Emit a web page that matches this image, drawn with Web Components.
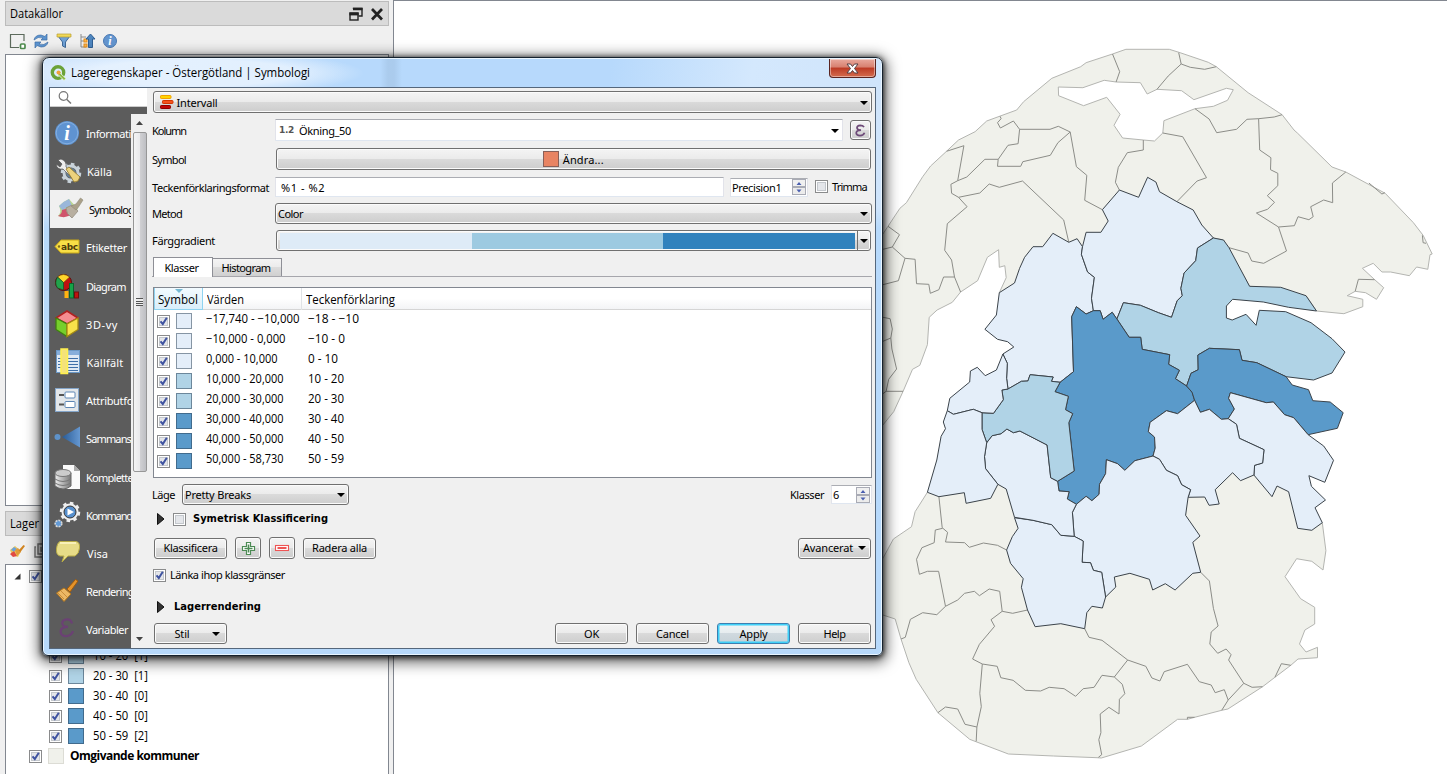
<!DOCTYPE html>
<html lang="sv">
<head>
<meta charset="utf-8">
<title>Lageregenskaper</title>
<style>
html,body{margin:0;height:100%;overflow:hidden;background:#f0f0f0}
body{font:11px "Noto Sans","Liberation Sans",sans-serif;color:#000}
</style>
</head>
<body>
<qgis-window></qgis-window>
<script>
const make = (name, css, html, after) => customElements.define(name, class extends HTMLElement {
  connectedCallback() {
    if (this.shadowRoot) return;
    const root = this.attachShadow({mode: 'open'});
    root.innerHTML = `<style>*{box-sizing:border-box}:host{box-sizing:border-box}${css}</style>` + (typeof html === 'function' ? html(this) : html);
    if (after) after(this, root);
  }
});
const at = (el, name, fallback = '') => el.getAttribute(name) ?? fallback;

/* Label fitted to a given width: letters are spread, or condensed for the seg and wide faces */
make('q-text', `:host{display:block;flex:none;white-space:pre;line-height:16px;height:16px}
:host([f=seg]){font-family:"Open Sans",sans-serif;font-size:12px}
:host([f=bold]){font-family:"Open Sans",sans-serif;font-weight:700;font-size:12px}
:host([f=wide]){font-family:"DejaVu Sans",sans-serif;font-weight:700;font-size:11px}
span{display:inline-block;transform-origin:0 50%}`, el => `<span>${at(el,'t')}</span>`, (el, root) => {
  const w = parseFloat(at(el, 'w', '0'));
  if (!w) return;
  const s = root.querySelector('span'), n = at(el, 't').length, own = s.getBoundingClientRect().width;
  if (own > w && /seg|wide/.test(at(el, 'f'))) s.style.transform = `scaleX(${(w / own).toFixed(4)})`;
  else s.style.letterSpacing = ((w - own) / n).toFixed(3) + 'px';
  el.style.width = w + 'px';
});

const ICONS = {
  add: '<path d="M15 9V2.500H1.500V15.500H10" fill="none" stroke="#5c6a5c" stroke-width="1.200"/><rect x="11.500" y="12" width="4.500" height="4.500" rx="1" fill="#fff" stroke="#4d8a4d" stroke-width="1.700"/>',
  refresh: '<path d="M2 8Q3 3 9 3L13 4.500L15 2V8H9L11 6Q6 4 2 8ZM16 10Q15 15 9 15L5 13.500L3 16V10H9L7 12Q12 14 16 10Z" fill="#5b93cf" stroke="#3d6da5" stroke-width=".7"/>',
  filter: '<path d="M3 4H15L10.500 10V15.500L7.500 14V10Z" fill="#6fa0d5" stroke="#3f6a99"/><path d="M2 2H16V5H2Z" fill="#f1d957" stroke="#b89d35" stroke-width=".7"/>',
  up: '<path d="M3 2V15H8M3 5H8M3 9H8" fill="none" stroke="#8b8b8b"/><rect x="6" y="7" width="3" height="3" fill="#ffb74d" stroke="#e88f1b"/><rect x="6" y="12" width="3" height="3" fill="#ffb74d" stroke="#e88f1b"/><path d="M12.500 2L17 7H14.500V15.500H10.500V7H8Z" fill="#4f86bf" stroke="#2f5f94"/>',
  info: '<circle cx="9" cy="9" r="6.500" fill="#6395cf" stroke="#4a79b3"/><text x="9" y="13" font-family="Liberation Serif,serif" font-weight="700" font-style="italic" font-size="12" fill="#fff" text-anchor="middle">i</text>',
  brush: '<path d="M1 8L6 4L12 9L9 15L3 13Z" fill="#e9c75c"/><path d="M1 12L5 9L8 14L4 15Z" fill="#e14a43"/><path d="M2 8L5 5L8 7L5 9.500Z" fill="#67a2e0"/><path d="M6 8L9 6L12 10L8 14Z" fill="#e09a3a"/><path d="M9.500 8.500L14.500 3L16 4L11.500 10Z" fill="#d18420"/>',
  stack: '<path d="M6 2H16V12H6ZM4 5H3V15H13V13" fill="none" stroke="#777" stroke-width="1.500"/><path d="M9 5V9H13" fill="none" stroke="#777" stroke-width="1.300"/>',
  float: '<path d="M4.500 2V1.500H13V9H9.500" fill="none" stroke="#222" stroke-width="1.400"/><path d="M4 2H13.500" stroke="#222" stroke-width="2.500"/><rect x="1" y="6" width="8" height="7" fill="#dadada" stroke="#222" stroke-width="1.400"/><path d="M.4 7H9.600" stroke="#222" stroke-width="2.800"/>',
  shut: '<path d="M2 2L12 12.500M12 2L2 12.500" stroke="#222" stroke-width="2.700"/>',
  logo: '<circle cx="8" cy="8.500" r="5.700" fill="none" stroke="#6aa238" stroke-width="3.400"/><path d="M8 7.500L11.500 8L10.500 9.500L16 14.500L14 16.500L9 11.500L8 12.500Z" fill="#8cbb45" stroke="#f3faf0" stroke-width=".8"/><circle cx="8.500" cy="8.500" r="2" fill="#f0a23c"/>',
  search: '<circle cx="5.500" cy="6" r="4.300" fill="none" stroke="#777" stroke-width="1.200"/><path d="M8.600 9.200L13 13.500" stroke="#777" stroke-width="1.500"/>',
  interval: '<rect x=".5" y=".5" width="10.500" height="3" rx=".7" fill="#ffd500" stroke="#f2a200"/><rect x="2.500" y="5.500" width="10.500" height="3" rx=".7" fill="#f4511e" stroke="#d23500"/><rect x=".5" y="10.500" width="10" height="3" rx=".7" fill="#c00808" stroke="#8e0000"/>',
  plus: '<path d="M5.500 1H9.500V5H13.500V9H9.500V13H5.500V9H1.500V5H5.500Z" fill="#fff" stroke="#4c8b54" stroke-width="1.200" transform="translate(0 .5)"/><path d="M7.500 3.500V11.500M3.500 7.500H11.500" stroke="#4c8b54" stroke-width="1.600"/>',
  minus: '<rect x=".5" y="4.500" width="13" height="5" fill="#fff" stroke="#ee5555" stroke-width="1.100"/><path d="M2.500 7H11.500" stroke="#ee5555" stroke-width="2"/>',
  eps: '<path d="M11 4.200Q10 2.300 7.200 2.300Q4 2.500 4 4.800Q4.200 7 8 7.200Q3.300 7.500 3.200 10Q3.400 12.600 7 12.600Q10.500 12.400 11.500 9.700" fill="none" stroke="#6d4a78" stroke-width="1.700"/>',
  sInfo: '<circle cx="12" cy="12" r="12" fill="#5f93d1"/><circle cx="12" cy="12" r="10.800" fill="none" stroke="#84afe0"/><text x="12" y="19" font-family="Liberation Serif,serif" font-weight="700" font-style="italic" font-size="20" fill="#fff" text-anchor="middle">i</text>',
  sTool: '<circle cx="15" cy="14" r="7" fill="none" stroke="#c9d3da" stroke-width="3"/><circle cx="15" cy="14" r="9" fill="none" stroke="#c9d3da" stroke-width="2.500" stroke-dasharray="3.500 3.500"/><circle cx="15" cy="14" r="5" fill="#668096"/><path d="M2 1L6 5L4 8L0 5Q1 11 7 10L17 20L20 17L10 8Q11 2 5 0Z" fill="#eee" stroke="#555" stroke-width=".7"/><path d="M10 10L13 8L24 18L22 22L18 23Z" fill="#ecd27c" stroke="#8b7124" stroke-width=".8"/>',
  sBrush: '<path d="M1 9Q6 4 11 2L20 12Q10 22 0 19Q4 15 1 9Z" fill="#b9d691"/><path d="M1 9Q6 4 11 2L14 9Q8 9 5 14Z" fill="#9ab7da"/><path d="M4 13L11 11L14 17Q8 22 0 19Q4 17 4 13Z" fill="#d0546c"/><path d="M8 11L14 8L20 14L14 21Q8 17 8 11Z" fill="#b8afa0" stroke="#8f887b" stroke-width=".7"/><path d="M13 9L18 7L22.500 1L25 3L20.500 10L18 13Z" fill="#aaa089" stroke="#8f8977" stroke-width=".6"/>',
  sAbc: '<path d="M6 5H24V18H6L0 11.500Z" fill="#f8df46" stroke="#c7a616"/><circle cx="4" cy="11.500" r="1.200" fill="#7f6c20"/><text x="14.500" y="14.500" font-family="DejaVu Sans,sans-serif" font-weight="700" font-size="9" text-anchor="middle" fill="#4c3c0b" textLength="17">abc</text>',
  sDiag: '<circle cx="8.500" cy="8.500" r="8" fill="#bf1010" stroke="#5b0808"/><path d="M8.500 8.500L2.500 3Q8.500-2 14.500 3Z" fill="#ffd52a" stroke="#7b6113" stroke-width=".6"/><path d="M8.500 8.500L2.500 3Q-1 9 2.500 14L8.500 16Z" fill="#22a24b" stroke="#134f26" stroke-width=".7"/><rect x="9.500" y="17" width="4" height="7" fill="#ffb310"/><rect x="14.500" y="9.500" width="4" height="14.500" fill="#16a348" stroke="#0c632b"/><rect x="19.500" y="18" width="4" height="6" fill="#bd1510" stroke="#71100c"/>',
  s3d: '<path d="M12 -1L23 6L12 12L1 6Z" fill="#f58c90" stroke="#b02020" stroke-width="1.500"/><path d="M1 6L12 12V24.500L1 17.500Z" fill="#76cf2c" stroke="#3f8110" stroke-width="1.300"/><path d="M23 6L12 12V24.500L23 17.500Z" fill="#f8e24a" stroke="#a58b14" stroke-width="1.300"/>',
  sField: '<rect x=".5" y=".5" width="23" height="22" fill="#dfe9f4" stroke="#6c98c5"/><path d="M1 1H23V5H1Z" fill="#87aedb"/><path d="M12 8.500H22M12 11.500H22M12 14.500H22M12 17.500H22M2 8.500H5M2 11.500H5M2 14.500H5M2 17.500H5M12 20.500H22" stroke="#3e6fa8"/><rect x="5" y="-1" width="6.500" height="24.500" fill="#f4e27a" stroke="#fff04d" stroke-width="1.500"/>',
  sForm: '<rect x=".5" y=".5" width="23" height="23" fill="#e2e6ea" stroke="#84a5c9"/><rect x="10" y="4" width="10" height="6" rx="1" fill="#fff" stroke="#5d86b5"/><rect x="10" y="13.500" width="10" height="6" rx="1" fill="#fff" stroke="#5d86b5"/><path d="M4 7H9M4 16.500H9" stroke="#555" stroke-width="2"/>',
  sJoin: '<defs><linearGradient id="j"><stop offset="0" stop-color="#295b96"/><stop offset="1" stop-color="#6698d1"/></linearGradient></defs><circle cx="2.500" cy="11" r="3" fill="#5e92c9"/><path d="M7 11L25 .5V21.500Z" fill="url(#j)"/>',
  sDb: '<defs><linearGradient id="d"><stop offset="0" stop-color="#eee"/><stop offset="1" stop-color="#777"/></linearGradient></defs><path d="M8 0H19L25 6V24H8Z" fill="#fafafa"/><path d="M19 0V6H25Z" fill="#aaa"/><path d="M0 8V21Q8 27 16 21V8Z" fill="url(#d)" stroke="#666"/><ellipse cx="8" cy="8" rx="8" ry="3.500" fill="#ccc" stroke="#777"/><path d="M0 14Q8 19 16 14M0 18Q8 23 16 18" fill="none" stroke="#777"/>',
  sGear: '<circle cx="15" cy="9" r="8.500" fill="#efefef"/><circle cx="15" cy="9" r="9" fill="none" stroke="#efefef" stroke-width="2.500" stroke-dasharray="3.500 3.500"/><circle cx="15" cy="9" r="6" fill="#568fcd" stroke="#333"/><path d="M12.500 5.500L19 9L12.500 12.500Z" fill="#fff"/><circle cx="3.500" cy="20.500" r="3.300" fill="#629ad6" stroke="#d9d9d9" stroke-width="1.600" stroke-dasharray="2 1"/>',
  sVisa: '<path d="M4 .5H20Q24 1 23.500 7T19 15H12L6 21L8 15H4Q0 14 .5 8T4 .5Z" fill="#e7dc88" stroke="#b7ab45"/><path d="M4 2H20" stroke="#fff9c8" stroke-width="1.500"/>',
  sRend: '<path d="M9 9L16 15L9 22.500L1.500 14Z" fill="#edb865" stroke="#b4761b"/><path d="M12 10L20.500 .5L23 2L15 13Z" fill="#e5932a" stroke="#9e5a0c"/><path d="M3 14L9 20M6 12L12 18" stroke="#c08332" stroke-width=".8"/>',
  sEps: '<path d="M17 6.500Q16 2 11.500 2.300Q7 3 7.300 6.500Q7.600 9.700 13 9.800Q5.600 9.900 5.600 14.500Q5.800 19.200 11 19.200Q16.500 18.800 18 14" fill="none" stroke="#6b4174" stroke-width="2.300"/>'
};
make('q-icon', ':host{display:block;flex:none}svg{display:block;overflow:visible}', el => {
  const w = at(el, 'w', 18), h = at(el, 'h', w);
  return `<svg width="${w}" height="${h}" viewBox="0 0 ${w} ${h}">${ICONS[at(el,'n')]}</svg>`;
});

const FACE = 'background:linear-gradient(#f4f4f4,#ebebeb 48%,#dadada 50%,#cdcdcd);border:1px solid #707070;border-radius:3px;box-shadow:inset 0 0 0 1px #fbfbfb;';
make('q-btn', `:host{display:flex;flex:none;align-items:center;justify-content:center;height:21px;width:73px;${FACE}}
:host([focus]){border-color:#3c7fb1;box-shadow:inset 0 0 0 1.500px #3fd0f8;background:linear-gradient(#f0f4f6,#e6ecef 48%,#d0d9df 50%,#c6d2d8)}`, '<slot></slot>');
make('q-arrow', ':host{display:block;flex:none;width:0;height:0;border:4px solid transparent;border-top-color:#000;border-bottom:0}', '');
make('q-combo', `:host{display:flex;flex:none;align-items:center;height:21px;padding:0 3.500px 0 3px;${FACE}}
:host([plain]){background:#fff;border-color:#abadb3 #e2e3ea #dfe6f0 #e2e3ea;border-radius:1px;box-shadow:none;padding-right:3px}
div{flex:1;display:flex;align-items:center}`, '<div><slot></slot></div><q-arrow style="margin-top:1px"></q-arrow>');
make('q-field', ':host{display:flex;flex:none;align-items:center;height:20px;background:#fff;border:1px solid;border-color:#abadb3 #e2e3ea #dfe6f0 #e2e3ea;padding:1px 0 0 5px}', '<slot></slot>');
make('q-spin', `:host{display:flex;flex:none;align-items:center;height:19px;background:#fff;border:1px solid;border-color:#abadb3 #e2e3ea #dfe6f0 #e2e3ea;padding:0 1px 0 1px}
div{flex:1;display:flex;padding-top:1px}svg{display:block}`, '<div><slot></slot></div><svg width="14" height="16"><rect x=".5" y=".5" width="13" height="7" fill="#f0f0f0" stroke="#a9abb5"/><rect x=".5" y="8.500" width="13" height="7" fill="#ececec" stroke="#a9abb5"/><path d="M4.500 6L7 3L9.500 6ZM4.500 10.500H9.500L7 13.500Z" fill="#4a5fb0"/></svg>');
make('q-check', ':host{display:block;flex:none}svg{display:block}', el => `<svg width="13" height="13"><rect x=".5" y=".5" width="12" height="12" fill="#fff" stroke="#8a8b8c"/><rect x="2.500" y="2.500" width="8" height="8" fill="#e4e6ea" stroke="#c3c7cc"/>${el.hasAttribute('on') ? '<path d="M3.500 6.300L5.800 9L9.800 2.800" fill="none" stroke="#3f53a0" stroke-width="2"/>' : ''}</svg>`);
make('q-swatch', ':host{display:block;flex:none;width:16px;height:16px;background:var(--c);border:1px solid rgba(40,60,80,.5)}:host([soft]){border-color:#dcdcd5}', '');
make('q-fold', ':host{display:block;flex:none;width:8px;height:12px}svg{display:block}', '<svg width="8" height="12"><path d="M.5 .5L7 6L.5 11.500Z" fill="#333" stroke="#111"/></svg>');

make('q-side', `:host{display:flex;flex:none;align-items:center;height:38.200px;color:#fff;overflow:hidden;width:81px}
:host([sel]){background:#f0f0f0;color:#000;height:38px}q-icon{width:31px}q-text{margin-top:2px}`, el => `<q-icon n="${at(el,'i')}" w="24" style="margin-left:${at(el,'dx','5')}px"></q-icon><q-text t="${at(el,'t')}" w="${at(el,'w')}"></q-text>`);

make('q-class', ':host{display:flex;height:20px;align-items:center;padding-left:3px}q-check{margin:4px 6px 0 0}q-swatch{margin:3px 14px 0 0}.l{margin-left:var(--g)}.v,.l{margin-top:0}', el =>
  `<q-check on></q-check><q-swatch style="--c:${at(el,'c')}"></q-swatch><q-text class="v" f="seg" t="${at(el,'v')}" w="${at(el,'vw')}"></q-text><q-text class="l" style="--g:${102 - at(el,'vw')}px" f="seg" t="${at(el,'l')}" w="${at(el,'lw')}"></q-text>`);
make('q-leaf', ':host{display:flex;height:20px;align-items:center;padding-left:43px}q-check{margin-right:6px}q-swatch{margin:-1px 8.500px 0 0}', el =>
  `<q-check on></q-check><q-swatch style="--c:${at(el,'c')}"></q-swatch><q-text f="seg" t="${at(el,'t')}" w="55"></q-text>`);

make('q-dockbar', ':host{display:flex;flex:none;align-items:center;height:25px;background:#dadada;border:1px solid #bcbcbc;padding:1px 4px 0 4px}div{flex:1}q-icon{margin:-1px 0 0 7px}', el =>
  `<q-text f="seg" t="${at(el,'t')}" w="${at(el,'w')}"></q-text><div></div><q-icon n="float" w="14"></q-icon><q-icon n="shut" w="14"></q-icon>`);

/* Map: vertices are recorded on three stacked sheets a, b and c */
const SHEET = {a: 30, b: 280, c: 510};
const line = s => { let y0 = 0; return s.trim().split(/\s+/).map(p => {
  if (SHEET[p] !== undefined) { y0 = SHEET[p]; return ''; }
  const [x, y] = p.split(',').map(Number);
  return (880 - 394 + x / 2.7654).toFixed(1) + ',' + (y0 - 1 + y / 3).toFixed(1);
}).join(' '); };
const LAND = [
 'a 680,58 800,58 830,68 908,97 930,110 1018,188 1112,254 1145,300 1155,310 1250,411 1288,426 1397,490 1475,578 1502,616 1527,672 1521,674 1515,718 1484,711 1464,737 1412,726 1388,726 1364,700 1334,715 1368,749 1393,773 1373,808 1343,788 1314,784 1292,797 1335,808 b 1335,80 1283,101 1207,93 a 1178,797 1022,769 950,630 922,624 740,600 560,700 330,788 349,743 345,707 330,712 328,659 297,682 270,752 223,786 b 200,67 158,90 136,112 131,194 110,256 90,268 64,334 38,395 8,435 -60,400 a -60,700 8,612 22,589 55,535 73,518 118,440 140,408 184,364 217,330 263,305 295,273 378,240 397,215 475,145 555,110 570,98 643,72',
 'b 131,637 235,600 400,600 540,640 850,600 975,560 1100,600 1150,640 1180,700 c 1223,38 1233,122 1225,180 1194,154 1152,146 1120,200 1163,266 1202,292 1202,342 1175,360 1160,402 1178,426 1210,412 1210,443 1156,447 1136,466 1092,502 1058,530 962,597 945,601 870,622 850,628 823,628 723,708 612,744 600,743 480,738 355,732 248,688 160,608 100,508 80,458 58,387 42,327 8,315 -60,250 8,145 37,87 87,50 b 97,695'];
const LAKE = 'a 493,171 561,173 620,151 653,156 720,158 739,192 766,178 834,182 868,209 958,175 977,179 961,211 922,229 871,236 785,272 782,309 759,333 728,330 671,324 647,286 664,253 627,202 563,227 494,197';
const BOUNDS = [
 'a 643,72 663,125 653,156','a 826,68 833,102 797,138 766,178','a 833,102 858,112 898,118 930,110',
 'a 871,236 910,267 931,308 986,298 1015,268 1047,266 1090,261 1112,254',
 'a 1047,266 1050,360 1081,383 1080,419 1100,430 1100,467 1071,497 1091,517 1072,538 1041,549 1102,591 1146,587 1156,560 1186,569 1198,560 1191,530 1227,510 1252,518 1251,459 1288,426',
 'a 1102,591 1124,663 1061,700 1028,693 1018,669 965,653','a 782,309 837,320 903,443 877,453 821,515','a 728,330 728,360 684,368 659,412 651,457 662,480',
 'a 332,259 335,266 325,278 333,294 369,273 386,298 470,298 493,289 526,306 543,410 572,436 566,511 615,539',
 'a 386,298 382,341 354,346 327,388 325,409 389,409 395,395 471,376 492,338 526,306','a 184,364 232,347 215,452',
 'a 327,388 290,388 240,441 215,452 196,463 198,490 217,502 276,489 302,462 330,472 394,453 508,570 522,637',
 'a 217,502 241,530 186,581 179,661 198,690 206,741 223,786','a 206,741 176,741 163,779 139,790 135,763 101,761 97,688 69,685 34,651 8,658',
 'a 69,685 51,752 8,764','a 22,589 54,614 34,651','a 1352,459 1388,492 1396,488','a 1500,616 1502,638 1510,640','a 1314,784 1323,748 1368,749',
 'b 8,112 28,116 34,147 30,174 8,184','b 30,174 33,207 46,267 24,298 17,334 64,334','b 17,334 8,341',
 'b 163,650 172,743 c 187,67 181,96 234,98 247,112 286,99 325,106 350,120',
 'c 173,55 153,60 150,98 116,113 101,148 109,193 131,184 162,184 181,289 215,270 234,250 261,244 275,257 302,237 331,244 338,304 367,310 408,300',
 'c 181,289 157,314 118,308 84,328 70,382 58,387',
 'c 338,304 307,329 317,349 275,403 256,447 283,462 324,469 334,503 368,511 402,541 444,543 468,532 509,536 541,559 562,536 592,532 614,496 648,501 685,450',
 'c 283,462 276,550 280,590 268,651 266,694','c 268,651 235,643 215,597 181,591 160,608',
 'c 566,356 578,382 614,391 685,450 735,469 752,504 774,513 786,485 850,463 883,515 916,525 927,548 952,539 963,570 1006,520','c 963,570 945,601',
 'c 648,501 670,523 677,551 662,568 661,612 633,592 609,612 611,668 605,689 613,734 604,742',
 'c 887,187 911,213 922,295 935,348 916,366 912,402 934,430 957,417 971,434 964,450 1006,520 1029,532 1058,530','c 1092,502 1110,461 1136,466','c 850,628 850,622 870,622'];
const L = '#e4eef9', M = '#b0d3e6', D = '#5a9aca';
const AREAS = [
 [L,'a 330,788 372,759 386,715 400,682 423,650 450,650 478,610 522,637 545,626 560,650 557,673 574,726 593,742 585,805 b 590,92 570,102 543,80 530,110 535,275 498,307 474,304 479,291 415,284 409,303 391,304 354,327 350,295 352,250 340,222 370,201 353,185 325,178 290,148 322,105'],
 [L,'a 560,650 570,607 611,607 631,573 615,539 662,480 715,502 740,442 763,456 773,485 821,515 866,540 890,585 922,624 878,654 873,692 841,729 832,775 836,797 822,812 b 806,112 770,98 720,76 673,68 655,117 642,97 617,118 609,92 590,92 a 585,805 593,742 574,726 557,673'],
 [M,'a 922,624 950,630 965,653 1022,769 1108,772 1178,797 b 1207,93 1130,82 1060,66 975,58 958,78 958,114 974,120 1012,103 1040,136 1049,91 1122,95 1192,128 1250,176 1286,216 1250,279 1199,300 1123,290 1042,248 1001,241 994,209 911,205 879,225 880,269 860,280 848,318 817,296 828,271 798,253 801,224 725,208 721,172 689,172 655,117 673,68 720,76 770,98 806,112 a 822,812 836,797 832,775 841,729 873,692 878,654'],
 [D,'b 543,80 570,102 590,92 609,92 617,118 642,97 655,117 689,172 721,172 725,208 801,224 798,253 828,271 817,296 848,318 863,337 870,361 823,401 792,392 747,427 742,455 759,471 761,504 755,528 705,542 677,571 657,551 626,539 624,581 607,613 606,643 586,662 570,649 543,673 518,657 523,635 495,633 491,604 537,573 522,428 533,401 513,389 521,349 484,335 498,307 535,275 530,110'],
 [D,'b 848,318 860,280 880,269 879,225 911,205 994,209 1001,241 1042,248 1123,290 1140,315 1185,329 1197,362 1245,366 1281,398 1265,445 1184,464 1144,413 1119,404 1088,366 1068,368 969,338 964,355 980,387 963,416 944,418 911,388 886,397 870,361 863,337'],
 [L,'b 969,338 1068,368 1088,366 1119,404 1144,413 1184,464 1227,498 1254,541 1230,607 1186,587 1193,619 1232,660 1203,683 1223,728 1194,751 1155,745 1130,635 1098,618 1084,650 1034,585 1036,556 1058,549 1062,509 994,475 986,433 963,416 980,387 964,355'],
 [L,'b 870,361 886,397 911,388 944,418 963,416 986,433 994,475 1062,509 1058,549 1036,556 1034,585 997,602 975,578 927,629 938,672 910,676 898,651 852,652 859,629 834,614 823,587 792,571 773,538 755,528 761,504 759,471 742,455 747,427 792,392 823,401'],
 [L,'b 755,528 773,538 792,571 823,587 834,614 859,629 852,652 845,706 885,768 c 865,97 887,187 865,190 816,240 789,221 754,240 745,208 691,190 648,201 652,231 624,261 613,187 590,181 582,158 559,157 562,93 537,79 b 532,697 543,673 570,649 586,662 606,643 607,613 624,581 626,539 657,551 677,571 705,542'],
 [L,'c 372,23 423,31 475,44 500,76 537,79 562,93 559,157 582,158 590,181 613,187 624,261 615,294 586,289 572,308 566,356 500,341 429,350 408,300 391,232 396,206 361,160 350,120 366,80 382,55'],
 [L,'b 295,488 310,467 335,461 351,447 369,458 387,453 462,495 472,593 491,604 495,633 523,635 518,657 543,673 532,697 537,769 500,766 475,734 423,721 372,712 349,627 326,613 292,566 289,530'],
 [M,'b 282,398 314,400 341,359 337,330 354,327 391,304 409,303 415,284 479,291 474,304 498,307 484,335 521,349 513,389 533,401 522,428 537,573 491,604 472,593 462,495 387,453 369,458 351,447 335,461 310,467 295,488 282,448'],
 [L,'b 340,222 352,250 350,295 354,327 337,330 341,359 314,400 282,398 258,388 203,403 186,392 193,355 248,306 250,273 269,262 291,287 322,270'],
 [L,'b 186,392 203,403 258,388 282,398 282,448 295,488 289,530 292,566 326,613 306,655 238,670 233,638 163,650 131,637 157,540 169,469 181,446 175,426']];
make('q-map', ':host{display:block;background:#fff;border-left:1px solid #828790;border-top:1px solid #828790;overflow:hidden}svg{display:block}', () => {
  const poly = (s, f, c) => `<polygon points="${line(s)}" fill="${f}" stroke="${c}"/>`;
  return `<svg width="1053" height="773" stroke-width="1" stroke-linejoin="round">${LAND.map(s => poly(s, '#f0f1eb', '#b4b5b1')).join('')}${poly(LAKE, '#fff', '#b4b5b1')}${BOUNDS.map(s => `<polyline points="${line(s)}" fill="none" stroke="#8c8d88"/>`).join('')}${AREAS.map(([f, s]) => poly(s, f, '#3b434a')).join('')}</svg>`;
});

make('q-docks', `:host{display:flex;flex-direction:column;padding:1px 0 0 5px;width:389px;background:#f0f0f0}
.tools{display:flex;height:28px;flex:none;align-items:center;gap:5px;padding:1px 0 0 4px}
.box{background:#fff;border:1px solid #828790}
.tree{flex:1;border-bottom:0;overflow:hidden}
.root{display:flex;align-items:center;height:20px;padding:0 0 0 8px;gap:8px;margin-top:1px}
.hid{height:60px}
.last{display:flex;height:20px;align-items:center;padding-left:23px}`,
`<q-dockbar t="Datakällor" w="53"></q-dockbar>
<div class="tools"><q-icon n="add"></q-icon><q-icon n="refresh"></q-icon><q-icon n="filter"></q-icon><q-icon n="up"></q-icon><q-icon n="info"></q-icon></div>
<div class="box" style="height:452px;flex:none"></div>
<q-dockbar t="Lager" w="29" style="margin-top:5px"></q-dockbar>
<div class="tools"><q-icon n="brush"></q-icon><q-icon n="stack"></q-icon></div>
<div class="box tree">
<div class="root"><svg width="7" height="7"><path d="M6.500 .5V6.500H.5Z" fill="#333"/></svg><q-check on></q-check></div>
<div class="hid"></div>
<q-leaf c="${M}" t="10 - 20  [1]"></q-leaf><q-leaf c="${M}" t="20 - 30  [1]"></q-leaf><q-leaf c="${D}" t="30 - 40  [0]"></q-leaf><q-leaf c="${D}" t="40 - 50  [0]"></q-leaf><q-leaf c="${D}" t="50 - 59  [2]"></q-leaf>
<div class="last"><q-check on></q-check><q-swatch soft style="--c:#f0f1eb;margin:-1px 6px 0"></q-swatch><q-text f="bold" t="Omgivande kommuner" w="129"></q-text></div>
</div>`);

make('q-sidebar', `:host{display:grid;grid-template:19px 541px / 81px 16px;width:97px;flex:none}
.s{grid-column:1/3;background:#fff;padding:2px 0 0 8px;border-bottom:1px solid #ccc}
.l{background:#5c5c5c;padding-top:7px;overflow:hidden}
.b{background:linear-gradient(#5c5c5c 7px,#f0f0f0 7px);padding:7px 0 0 1px;display:flex;flex-direction:column;align-items:center}
.up,.dn{height:18px;flex:none;display:flex;align-items:center}
.t{width:14px;height:340px;flex:none;border:1px solid #979797;border-radius:2px;background:linear-gradient(90deg,#f4f4f4,#e9e9eb 50%,#d0d0d3 52%,#bebfc3);display:flex;align-items:center;justify-content:center}
.g{width:7px;height:8px;background:repeating-linear-gradient(#555 0 1px,#eee 1px 2.500px)}
.f{flex:1}`,
`<div class="s"><q-icon n="search" w="15"></q-icon></div>
<div class="l"><q-side i="sInfo" t="Informati" w="45"></q-side><q-side i="sTool" t="Källa" w="25" dx="6"></q-side><q-side sel i="sBrush" t="Symbolog" w="45" dx="8"></q-side><q-side i="sAbc" t="Etiketter" w="41"></q-side><q-side i="sDiag" t="Diagram" w="40"></q-side><q-side i="s3d" t="3D-vy" w="32"></q-side><q-side i="sField" t="Källfält" w="37" dx="5.500"></q-side><q-side i="sForm" t="Attributfo" w="47"></q-side><q-side i="sJoin" t="Sammans" w="45"></q-side><q-side i="sDb" t="Komplette" w="47"></q-side><q-side i="sGear" t="Kommand" w="46"></q-side><q-side i="sVisa" t="Visa" w="21" dx="6"></q-side><q-side i="sRend" t="Rendering" w="48"></q-side><q-side i="sEps" t="Variabler" w="42"></q-side></div>
<div class="b"><div class="up"><svg width="7" height="4"><path d="M0 4L3.500 0L7 4Z" fill="#444"/></svg></div><div class="t"><div class="g"></div></div><div class="f"></div><div class="dn"><svg width="7" height="4"><path d="M0 0L3.500 4L7 0Z" fill="#444"/></svg></div></div>`);

make('q-table', `:host{display:block;background:#fff;border:1px solid #828790;height:191px;width:719px}
.h{display:flex;height:22px;border-bottom:1px solid #d5d5d5;background:linear-gradient(#fff 50%,#f3f4f6);align-items:center;margin-bottom:-1px}
.h div{height:22px;display:flex;align-items:center;border-right:1px solid #e0e3e6;padding-top:3px}
.h .a{width:49px;padding-left:3px;border:1px solid #8fd3f0;border-top:0;background:linear-gradient(#f3fbff,#d9eefa);position:relative}
.a svg{position:absolute;left:20px;top:1px}`,
`<div class="h"><div class="a"><svg width="8" height="4"><path d="M0 0H8L4 4Z" fill="#76b9d3"/></svg><q-text f="seg" t="Symbol" w="40"></q-text></div><div style="width:99px;padding-left:4px"><q-text f="seg" t="Värden" w="37"></q-text></div><div style="border:0;padding-left:4px"><q-text f="seg" t="Teckenförklaring" w="89"></q-text></div></div>
<q-class c="${L}" v="−17,740 - −10,000" vw="93.500" l="−18 - −10" lw="51"></q-class>
<q-class c="${L}" v="−10,000 - 0,000" vw="79.500" l="−10 - 0" lw="37"></q-class>
<q-class c="${L}" v="0,000 - 10,000" vw="71.500" l="0 - 10" lw="30"></q-class>
<q-class c="${M}" v="10,000 - 20,000" vw="77.500" l="10 - 20" lw="36"></q-class>
<q-class c="${M}" v="20,000 - 30,000" vw="77.500" l="20 - 30" lw="36"></q-class>
<q-class c="${D}" v="30,000 - 40,000" vw="77.500" l="30 - 40" lw="36"></q-class>
<q-class c="${D}" v="40,000 - 50,000" vw="77.500" l="40 - 50" lw="36"></q-class>
<q-class c="${D}" v="50,000 - 58,730" vw="77.500" l="50 - 59" lw="36"></q-class>`);

make('q-form', `:host{display:block;padding-left:5px;flex:1;min-width:0}
.r{display:flex;align-items:center;width:720px}
.k{width:123px;flex:none}
.k.low{margin-top:2px}
.sp{flex:1}
.ramp{width:595px;height:21px;display:flex;padding:1px 0 1px 3px;${FACE}}
.ramp i{display:block;height:16px;margin-top:.5px}
.ramp b{width:13px;margin-left:2px;border-left:1px solid #707070;margin-top:-1px;margin-bottom:-1px;display:flex;align-items:center;justify-content:center}
.tabs{display:flex;align-items:flex-end;height:20px;margin-top:6px;padding-left:1px;border-bottom:1px solid #a6a6ac;width:720px}
.tab{border:1px solid #8e8f96;border-bottom:0;display:flex;justify-content:center;align-items:center}
.t1{width:60px;height:20px;background:#fff;margin-bottom:-1px;padding-right:3px}
.t2{width:69px;height:18px;border-left:0;padding-right:2px;background:linear-gradient(#f4f4f4,#ebebeb 50%,#dcdcdc 50%,#d0d0d0)}`,
`<div class="r" style="margin-top:3px;padding-left:1px"><q-combo style="width:719px;height:22px;padding-left:6px"><q-icon n="interval" w="14"></q-icon><q-text style="margin:1px 0 0 2.500px" t="Intervall" w="41"></q-text></q-combo></div>
<div class="r" style="margin-top:6px;height:22px"><q-text class="k low" t="Kolumn"></q-text><q-combo plain style="width:568px;height:22px"><q-text f="bold" style="font-size:9px;color:#555;font-family:'DejaVu Sans',sans-serif" t="1.2" w="15"></q-text><q-text style="margin:2px 0 0 5px" t="Ökning_50" w="52"></q-text></q-combo><q-btn style="width:21px;height:20px;margin-left:7px"><q-icon n="eps" w="15"></q-icon></q-btn></div>
<div class="r" style="margin-top:7px"><q-text class="k low" t="Symbol"></q-text><q-btn style="width:595px;height:22px;margin-left:1px"><q-swatch style="--c:#e88463;margin-right:3.500px"></q-swatch><q-text style="margin-top:2px" t="Ändra..." w="41"></q-text></q-btn></div>
<div class="r" style="margin-top:7px;height:20px"><q-text class="k low" t="Teckenförklaringsformat"></q-text><q-field style="width:449px"><q-text t="%1 - %2" w="44"></q-text></q-field><q-spin style="width:78px;margin-left:6px"><q-text t="Precision" w="43.500"></q-text><q-text t="1"></q-text></q-spin><q-check style="margin:-1px 4px 0 7px"></q-check><q-text t="Trimma" w="35"></q-text></div>
<div class="r" style="margin-top:6px"><q-text class="k" t="Metod"></q-text><q-combo style="width:597px;padding-left:2px"><q-text t="Color" w="25"></q-text></q-combo></div>
<div class="r" style="margin-top:6px"><q-text class="k" t="Färggradient"></q-text><div class="ramp" style="margin-left:1px"><i style="width:192px;background:#deebf7"></i><i style="width:192px;background:#9dcae1"></i><i style="width:192px;background:#3182bd"></i><b><q-arrow></q-arrow></b></div></div>
<div class="tabs"><div class="tab t1"><q-text t="Klasser" w="34"></q-text></div><div class="tab t2"><q-text t="Histogram" w="49"></q-text></div></div>
<q-table style="margin:10px 0 0 1px"></q-table>
<div class="r" style="margin-top:6px;height:21px"><q-text t="Läge" w="23" style="margin-right:7px"></q-text><q-combo style="width:167px;padding-left:2px"><q-text t="Pretty Breaks" w="66"></q-text></q-combo><div class="sp"></div><q-text t="Klasser" w="34" style="margin-right:7px"></q-text><q-spin style="width:41px"><q-text t="6"></q-text></q-spin></div>
<div class="r" style="margin-top:6px;height:16px;padding-left:5px"><q-fold></q-fold><q-check style="margin:0 7px 0 8px"></q-check><q-text f="wide" t="Symetrisk Klassificering" w="135"></q-text></div>
<div class="r" style="margin-top:10px;height:22px;padding:0 1px 0 2px;gap:8px"><q-btn><q-text t="Klassificera" w="54"></q-text></q-btn><q-btn style="width:26px;height:22px"><q-icon n="plus" w="15"></q-icon></q-btn><q-btn style="width:26px;height:22px"><q-icon n="minus" w="14"></q-icon></q-btn><q-btn><q-text t="Radera alla" w="55"></q-text></q-btn><div class="sp"></div><q-btn><q-text t="Avancerat" w="50" style="margin-right:5px"></q-text><q-arrow></q-arrow></q-btn></div>
<div class="r" style="margin-top:8px;height:16px;padding-left:1px"><q-check on></q-check><q-text style="margin-left:4px" t="Länka ihop klassgränser" w="115"></q-text></div>
<div class="r" style="margin-top:16px;height:16px;padding-left:5px"><q-fold></q-fold><q-text f="wide" style="margin-left:9px" t="Lagerrendering" w="87"></q-text></div>
<div class="r" style="margin-top:8px;padding:0 1px 0 2px;gap:8px"><q-btn><q-text t="Stil" w="15" style="margin:0 22px 0 13px"></q-text><q-arrow></q-arrow></q-btn><div class="sp"></div><q-btn><q-text t="OK" w="15"></q-text></q-btn><q-btn><q-text t="Cancel" w="33"></q-text></q-btn><q-btn focus><q-text t="Apply" w="28"></q-text></q-btn><q-btn><q-text t="Help" w="22"></q-text></q-btn></div>`,
(el, root) => root.querySelectorAll('.k').forEach(k => {
  const w = {Kolumn: 34, Symbol: 34, 'Teckenförklaringsformat': 117, Metod: 30, 'Färggradient': 63}[k.getAttribute('t')];
  const s = k.shadowRoot.querySelector('span');
  s.style.letterSpacing = (w - s.getBoundingClientRect().width) / k.getAttribute('t').length + 'px';
}));

make('q-dialog', `:host{display:flex;flex-direction:column;width:841px;height:599px;border:1px solid #16222e;border-radius:7px 7px 6px 6px;
background:linear-gradient(#cfe4fb 0 150px,#b7d9fb 170px);box-shadow:inset 0 0 0 1px #e9f5ff,0 1px 5px 1px rgba(0,0,0,.7),0 3px 14px 4px rgba(0,0,0,.55);padding:1px 6px 6px 6px}
.bar{height:28px;flex:none;display:flex;margin:0 -5px;padding:0 1px 0 6px;border-radius:5px 5px 0 0;
background:linear-gradient(90deg,#0000 336px,#7f9bb838 344px 350px,#0000 358px),radial-gradient(ellipse 170px 22px at 150px 14px,#eaf4ffd0 60%,#eaf4ff00),linear-gradient(100deg,#d2e6fc 0,#b7d9fc 300px,#b7d9fc 560px,#d4e8fd 700px,#cfe4fb)}
.bar q-icon{margin-top:5px}.bar q-text{margin:6px 0 0 3px}.sp{flex:1}
.x{width:47px;height:19px;border:1px solid #5a2420;border-top:0;border-radius:0 0 4px 4px;margin-right:4px;background:linear-gradient(#e9a99d,#d7806f 45%,#bc3a24 50%,#cf6347 90%);box-shadow:inset 0 0 0 1px #ffffff70;display:flex;align-items:center;justify-content:center}
.body{flex:1;min-height:0;border:1px solid #55677c;background:#f0f0f0;display:flex;overflow:hidden}`,
`<div class="bar"><q-icon n="logo" w="18"></q-icon><q-text f="seg" t="Lageregenskaper - Östergötland | Symbologi" w="239"></q-text><div class="sp"></div><div class="x"><svg width="13" height="11"><path d="M1 1H4.500L6.500 3.500L8.500 1H12L8.500 5.500L12 10H8.500L6.500 7.500L4.500 10H1L4.500 5.500Z" fill="#fff" stroke="#534146"/></svg></div></div>
<div class="body"><q-sidebar></q-sidebar><q-form></q-form></div>`);

make('qgis-window', ':host{display:grid;grid-template-columns:389px 1fr;column-gap:4px;width:1447px;height:774px;position:relative;overflow:hidden;background:#f0f0f0}q-dialog{position:absolute;left:42px;top:57px}',
 '<q-docks></q-docks><q-map></q-map><q-dialog></q-dialog>');
</script>
</body>
</html>
